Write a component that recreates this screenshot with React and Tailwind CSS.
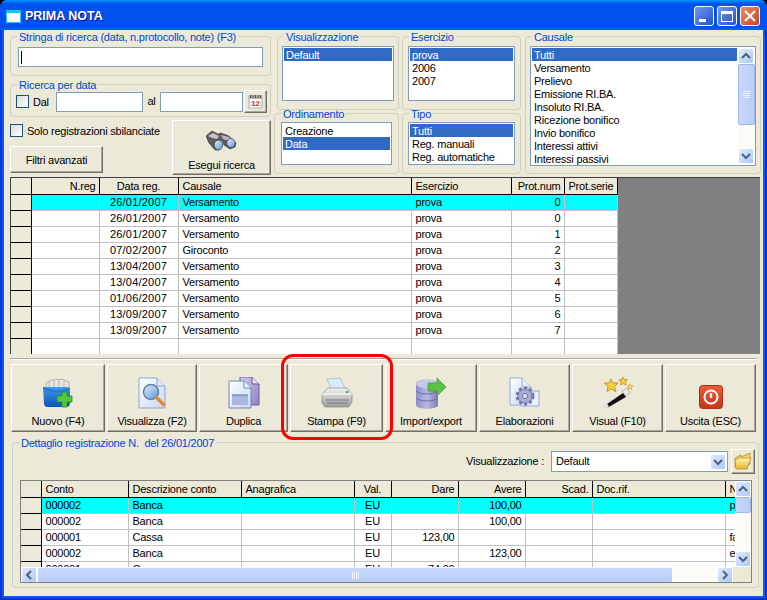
import React from 'react';

const Legend = ({ children }) => (
    <legend className="ml-[6px] px-[2px] h-[13px] leading-[14px] text-[#0046d5] whitespace-nowrap">{children}</legend>
);

const Group = ({ title, className, pad, children }) => (
    <fieldset className={`border border-[#d0d0bf] rounded-[4px] ${className}`}>
        <Legend>{title}</Legend>
        <div className={pad}>{children}</div>
    </fieldset>
);

const ListBox = ({ items, selected, className }) => (
    <div className={`border border-[#7f9db9] bg-white p-[1px] overflow-hidden ${className}`}>
        {items.map((item) => (
            <div
                key={item}
                className={`h-[13px] leading-[14px] pl-[2px] whitespace-nowrap ${item === selected ? 'bg-[#316ac5] text-white' : 'text-black'}`}
            >
                {item}
            </div>
        ))}
    </div>
);

const XpCheck = () => (
    <span className="block w-[13px] h-[13px] border border-[#1c5180] bg-gradient-to-br from-[#dcdcd7] to-white shrink-0" />
);

const Raised = ({ className, children }) => (
    <div className={`bg-[#ece9d8] border border-t-white border-l-white border-r-[#716f64] border-b-[#716f64] shadow-[inset_-1px_-1px_0_#aca899] ${className}`}>
        {children}
    </div>
);

const ScrollArrow = ({ dir }) => {
    const paths = { up: 'M3 9l4-4 4 4', down: 'M3 5l4 4 4-4', left: 'M9 3L5 7l4 4', right: 'M5 3l4 4-4 4' };
    return (
        <span className="flex items-center justify-center w-[16px] h-[16px] shrink-0 rounded-[2px] border border-white bg-gradient-to-br from-[#e1eafe] to-[#aec8f7]">
            <svg width="14" height="14" viewBox="0 0 14 14" fill="none" stroke="#4d6185" strokeWidth="2">
                <path d={paths[dir]} />
            </svg>
        </span>
    );
};

const VScroll = ({ thumb, fill, className }) => (
    <div className={`w-[17px] flex flex-col bg-[#fbfbf8] ${className}`}>
        <ScrollArrow dir="up" />
        <div className={`${thumb} rounded-[2px] border border-[#f5f8ff] outline outline-[#9fb6e6] -outline-offset-1 bg-gradient-to-r from-[#c9d8fc] to-[#b9cdf8] flex items-center justify-center shrink-0`}>
            {fill && (
                <span className="flex flex-col gap-[1px] w-[7px]">
                    <i className="block h-[1px] bg-[#eef4fe]" />
                    <i className="block h-[1px] bg-[#eef4fe]" />
                    <i className="block h-[1px] bg-[#eef4fe]" />
                    <i className="block h-[1px] bg-[#eef4fe]" />
                </span>
            )}
        </div>
        <div className="flex-1" />
        <ScrollArrow dir="down" />
    </div>
);

const mainCols = [
    { label: '', w: 20 },
    { label: 'N.reg', w: 68, right: true },
    { label: 'Data reg.', w: 79, center: true, date: true },
    { label: 'Causale', w: 233 },
    { label: 'Esercizio', w: 100 },
    { label: 'Prot.num', w: 53, right: true },
    { label: 'Prot.serie', w: 53 },
];

const mainRows = [
    ['', '', '26/01/2007', 'Versamento', 'prova', '0', ''],
    ['', '', '26/01/2007', 'Versamento', 'prova', '0', ''],
    ['', '', '26/01/2007', 'Versamento', 'prova', '1', ''],
    ['', '', '07/02/2007', 'Giroconto', 'prova', '2', ''],
    ['', '', '13/04/2007', 'Versamento', 'prova', '3', ''],
    ['', '', '13/04/2007', 'Versamento', 'prova', '4', ''],
    ['', '', '01/06/2007', 'Versamento', 'prova', '5', ''],
    ['', '', '13/09/2007', 'Versamento', 'prova', '6', ''],
    ['', '', '13/09/2007', 'Versamento', 'prova', '7', ''],
    ['', '', '', '', '', '', ''],
];

const detailCols = [
    { label: '', w: 20 },
    { label: 'Conto', w: 87 },
    { label: 'Descrizione conto', w: 113 },
    { label: 'Anagrafica', w: 113 },
    { label: 'Val.', w: 37, center: true },
    { label: 'Dare', w: 67, right: true },
    { label: 'Avere', w: 67, right: true },
    { label: 'Scad.', w: 67, right: true },
    { label: 'Doc.rif.', w: 133 },
    { label: 'Note', w: 60 },
];

const detailRows = [
    ['', '000002', 'Banca', '', 'EU', '', '100,00', '', '', 'pagamento'],
    ['', '000002', 'Banca', '', 'EU', '', '100,00', '', '', ''],
    ['', '000001', 'Cassa', '', 'EU', '123,00', '', '', '', 'fattura'],
    ['', '000002', 'Banca', '', 'EU', '', '123,00', '', '', 'estratto'],
    ['', '000001', 'Cassa', '', 'EU', '74,00', '', '', '', ''],
];

const cellAlign = (col) => {
    if (col.right) return 'text-right pr-[3px]';
    if (col.center) return 'text-center';
    return 'text-left pl-[4px]';
};

const DataGrid = ({ cols, rows }) => (
    <table className="table-fixed border-collapse" style={{ width: cols.reduce((s, c) => s + c.w, 0) }}>
        <colgroup>
            {cols.map((c, i) => (
                <col key={i} style={{ width: c.w }} />
            ))}
        </colgroup>
        <thead>
            <tr className="h-[16px]">
                {cols.map((c, i) => (
                    <th key={i} className={`p-0 font-normal leading-[12px] bg-[#ece9d8] border-r border-b border-black overflow-hidden whitespace-nowrap ${cellAlign(c)}`}>
                        {c.label}
                    </th>
                ))}
            </tr>
        </thead>
        <tbody>
            {rows.map((row, r) => (
                <tr key={r} className="h-[16px]">
                    {row.map((v, i) =>
                        i === 0 ? (
                            <td key={i} className="p-0 bg-[#ece9d8] border-r border-b border-black" />
                        ) : (
                            <td
                                key={i}
                                className={`p-0 leading-[12px] border-r border-b border-[#c0c0c0] overflow-hidden whitespace-nowrap ${r === 0 ? 'bg-[#00ffff]' : 'bg-white'} ${cellAlign(cols[i])} ${cols[i].date ? 'tracking-[0.2px]' : ''}`}
                            >
                                {v}
                            </td>
                        )
                    )}
                </tr>
            ))}
        </tbody>
    </table>
);

const Defs = () => (
    <svg width="0" height="0" className="absolute">
        <defs>
            <linearGradient id="blueFolder" x1="0" y1="0" x2="0" y2="1">
                <stop offset="0" stopColor="#3d9be8" />
                <stop offset="1" stopColor="#0a52b8" />
            </linearGradient>
            <linearGradient id="paper" x1="0" y1="0" x2="1" y2="1">
                <stop offset="0" stopColor="#ffffff" />
                <stop offset="1" stopColor="#c6d6f2" />
            </linearGradient>
            <linearGradient id="purple" x1="0" y1="0" x2="1" y2="1">
                <stop offset="0" stopColor="#d4cbec" />
                <stop offset="1" stopColor="#8f7fc4" />
            </linearGradient>
            <linearGradient id="dbCyl" x1="0" y1="0" x2="1" y2="0">
                <stop offset="0" stopColor="#8e8ec6" />
                <stop offset="0.5" stopColor="#b9b9e2" />
                <stop offset="1" stopColor="#7c7cb4" />
            </linearGradient>
            <linearGradient id="printerBody" x1="0" y1="0" x2="0" y2="1">
                <stop offset="0" stopColor="#f2f2f2" />
                <stop offset="1" stopColor="#9c9c9c" />
            </linearGradient>
            <linearGradient id="redBtn" x1="0" y1="0" x2="0" y2="1">
                <stop offset="0" stopColor="#ee5a38" />
                <stop offset="1" stopColor="#c4361a" />
            </linearGradient>
            <linearGradient id="lens" x1="0" y1="0" x2="1" y2="1">
                <stop offset="0" stopColor="#e4f0ff" />
                <stop offset="1" stopColor="#5d93dc" />
            </linearGradient>
            <linearGradient id="folderYellow" x1="0" y1="0" x2="0" y2="1">
                <stop offset="0" stopColor="#fff2a8" />
                <stop offset="1" stopColor="#eab52e" />
            </linearGradient>
        </defs>
    </svg>
);

const NuovoIcon = () => (
    <svg width="32" height="32" viewBox="0 0 32 32">
        <path d="M4 6l5-3h3l2-1 3 1 3-1 4 2 3 1v7H4z" fill="#e6e6e0" stroke="#9a9a94" strokeWidth="0.7" />
        <path d="M7 4v6M12 3v7M17 3v7M22 4v6" stroke="#b9b9b2" />
        <path d="M1 10h24l3 1v15a4 4 0 0 1-4 4H6a4 4 0 0 1-4-4z" fill="url(#blueFolder)" />
        <path d="M1 10c8 4 18 4 27 1v2c-9 3-19 3-27-1z" fill="#2079d6" />
        <path d="M20 15h5v4h5v6h-5v5h-5v-5h-5v-6h5z" fill="#54c83c" stroke="#2b8a20" strokeWidth="0.8" />
    </svg>
);

const VisualizzaIcon = () => (
    <svg width="32" height="32" viewBox="0 0 32 32">
        <path d="M3 1h18l8 8v22H3z" fill="url(#paper)" stroke="#8aa4d4" />
        <path d="M21 1v8h8" fill="#dfe8f8" stroke="#8aa4d4" />
        <circle cx="15" cy="15" r="7.5" fill="url(#lens)" stroke="#6b7e9e" strokeWidth="1.5" />
        <path d="M20.5 20.5l7 7" stroke="#e58a2c" strokeWidth="3.5" strokeLinecap="round" />
    </svg>
);

const DuplicaIcon = () => (
    <svg width="32" height="32" viewBox="0 0 32 32">
        <path d="M12 0h12l7 7v21H12z" fill="url(#purple)" stroke="#6a5aa4" />
        <path d="M24 0v7h7" fill="#e6e0f4" stroke="#6a5aa4" />
        <path d="M1 4h15l7 7v20H1z" fill="url(#paper)" stroke="#6f87bc" />
        <path d="M16 4v7h7" fill="#eef3fc" stroke="#6f87bc" />
        <rect x="4" y="17" width="16" height="11" fill="#aab9de" />
        <rect x="4" y="17" width="16" height="2.5" fill="#8ea1cf" />
    </svg>
);

const PrinterIcon = () => (
    <svg width="32" height="32" viewBox="0 0 32 32">
        <path d="M6 2l13-1 5 10-13 3z" fill="#dbeafc" stroke="#9db2cc" strokeWidth="0.7" />
        <path d="M1 17l6-6h19l5 6v8l-3 5H4l-3-4z" fill="url(#printerBody)" stroke="#8b8b8b" strokeWidth="0.7" />
        <path d="M1 17h30" stroke="#fff" />
        <path d="M5 23h23M6 26h21" stroke="#777" />
        <circle cx="26" cy="15" r="1.3" fill="#39b54a" />
    </svg>
);

const ImportIcon = () => (
    <svg width="32" height="32" viewBox="0 0 32 32">
        <path d="M1 7c0-6 22-6 22 0v21c0 5-22 5-22 0z" fill="url(#dbCyl)" />
        <ellipse cx="12" cy="7" rx="11" ry="4" fill="#c9c9ec" />
        <path d="M1 14c4 4 18 4 22 0M1 21c4 4 18 4 22 0" fill="none" stroke="#6d6da4" />
        <path d="M13 6h9V1l9 9-9 9v-5h-9z" fill="#5cc244" stroke="#3f9a2c" strokeWidth="0.7" />
    </svg>
);

const ElaborazioniIcon = () => (
    <svg width="32" height="32" viewBox="0 0 32 32">
        <path d="M1 1h12l9 9v18H1z" fill="url(#paper)" stroke="#92aad8" />
        <path d="M13 1v9h9" fill="#e6eefb" stroke="#92aad8" />
        <path d="M22 14l8 0v15H12v-4h10z" fill="#eaf1fc" stroke="#92aad8" />
        <circle cx="16" cy="19" r="8" fill="#9a9ccc" stroke="#7677a8" strokeWidth="3" strokeDasharray="3 2.2" />
        <circle cx="16" cy="19" r="6" fill="#a9abd6" />
        <circle cx="16" cy="19" r="2.6" fill="#dfe3f4" stroke="#6f70a0" />
    </svg>
);

const WandIcon = () => (
    <svg width="32" height="32" viewBox="0 0 32 32">
        <path d="M2 29l19-13 3 4L5 31z" fill="#111" />
        <path d="M1 29l4-3 2 4-3 2z" fill="#ddd" />
        <path d="M20 14l5-3 3 5-4 3z" fill="#e8e8e8" stroke="#999" strokeWidth="0.6" />
        <path d="M9 2l2 4 5 0-3.5 3.5 1.5 5-5-2.5-4 2.5 1-5L2 6h5z" fill="#f6cf3a" stroke="#a97e12" strokeWidth="0.7" />
        <path d="M21 0l1.5 2.5 3 .2-2 2.2.6 3-3-1.3-2.6 1.3.5-3-2-2.2 3-.2z" fill="#f6cf3a" stroke="#a97e12" strokeWidth="0.6" />
        <path d="M28 7l1 2 2 0-1.5 1.500.5 2-2-1-2 1 .5-2L25 9h2z" fill="#f9dd6a" stroke="#b08a1c" strokeWidth="0.5" />
    </svg>
);

const PowerIcon = () => (
    <svg width="24" height="24" viewBox="0 0 24 24">
        <rect x="0.5" y="0.5" width="23" height="23" rx="3" fill="url(#redBtn)" stroke="#a83217" />
        <circle cx="12" cy="12" r="6.5" fill="none" stroke="#fff" strokeWidth="2" />
        <path d="M12 8v5" stroke="#fff" strokeWidth="2.4" />
    </svg>
);

const Binoculars = () => (
    <svg width="32" height="22" viewBox="0 0 32 22">
        <path d="M0 6l6-5 6 3 3-1 8 3 7 7-1 4-5 2-6-4-2-5-2 1 1 5-2 4-4 0-6-7z" fill="#5c5c60" stroke="#303034" strokeWidth="0.6" />
        <path d="M2 6l5-3 6 3-2 3-5-1z" fill="#c4c4c8" />
        <path d="M15 5l8 2 3 3-7 0-3-2z" fill="#b4b4b8" />
        <ellipse cx="12.500" cy="15" rx="4.200" ry="4.800" fill="url(#lens)" stroke="#3c3c40" strokeWidth="0.7" />
        <ellipse cx="25" cy="13" rx="4.200" ry="4.500" fill="url(#lens)" stroke="#3c3c40" strokeWidth="0.7" />
    </svg>
);

const CalendarIcon = () => (
    <svg width="15" height="15" viewBox="0 0 15 15">
        <rect x="1" y="2" width="13" height="12" fill="#fff" stroke="#8d8d9c" strokeWidth="0.7" />
        <rect x="1" y="1" width="13" height="4" fill="#b6b0a4" />
        <path d="M2.500 1v3M5 1v3M7.500 1v3M10 1v3M12.500 1v3" stroke="#55524c" />
        <path d="M1 11h13M1 8.500h13" stroke="#c5cce8" />
        <text x="7.500" y="11.500" textAnchor="middle" fontSize="8" fontWeight="700" fill="#e1471b" fontFamily="Liberation Sans, sans-serif">12</text>
    </svg>
);

const FolderIcon = () => (
    <svg width="18" height="17" viewBox="0 0 18 17">
        <path d="M1 5l6-3v2l9-4v11l-9 5-6-2z" fill="#f4d468" stroke="#a98823" strokeWidth="0.7" />
        <path d="M1 7l4-2 12 0-4 11H2z" fill="url(#folderYellow)" stroke="#a98823" strokeWidth="0.7" />
    </svg>
);

const ToolButton = ({ icon, label }) => (
    <Raised className="h-[68px] mr-[2px] flex flex-col items-center">
        <div className="h-[45px] flex items-end justify-center pb-[1px]">{icon}</div>
        <div className="mt-[5px] leading-[13px] whitespace-nowrap">{label}</div>
    </Raised>
);

const tools = [
    { label: 'Nuovo (F4)', icon: <NuovoIcon /> },
    { label: 'Visualizza (F2)', icon: <VisualizzaIcon /> },
    { label: 'Duplica', icon: <DuplicaIcon /> },
    { label: 'Stampa (F9)', icon: <PrinterIcon /> },
    { label: 'Import/export', icon: <ImportIcon /> },
    { label: 'Elaborazioni', icon: <ElaborazioniIcon /> },
    { label: 'Visual (F10)', icon: <WandIcon /> },
    { label: 'Uscita (ESC)', icon: <PowerIcon /> },
];

const causali = ['Tutti', 'Versamento', 'Prelievo', 'Emissione RI.BA.', 'Insoluto RI.BA.', 'Ricezione bonifico', 'Invio bonifico', 'Interessi attivi', 'Interessi passivi'];

const TitleBar = () => (
    <div className="h-[30px] shrink-0 rounded-t-[7px] bg-gradient-to-b from-[#0997ff] via-[#0053ee] via-[12%] to-[#0050ee] flex items-center pt-[2px] pl-[6px] pr-[7px] tracking-normal">
        <span className="block w-[15px] h-[13px] bg-white border-t-[3px] border-[#14c8e6] border-x border-b" />
        <span className="ml-[4px] mt-[1px] text-white font-bold text-[12.5px] [text-shadow:1px_1px_#0f1089]">PRIMA NOTA</span>
        <div className="ml-auto flex gap-[3px]">
            <span className="relative w-[20px] h-[20px] rounded-[3px] border border-white bg-gradient-to-br from-[#6f97f3] to-[#2550d0]">
                <i className="absolute left-[4px] bottom-[3px] w-[7px] h-[3px] bg-white" />
            </span>
            <span className="flex items-center justify-center w-[20px] h-[20px] rounded-[3px] border border-white bg-gradient-to-br from-[#6f97f3] to-[#2550d0]">
                <i className="block w-[12px] h-[11px] border border-white border-t-[3px]" />
            </span>
            <span className="flex items-center justify-center w-[20px] h-[20px] rounded-[3px] border border-white bg-gradient-to-br from-[#ee8c68] to-[#c8401c]">
                <svg width="12" height="12" viewBox="0 0 12 12" stroke="#fff" strokeWidth="2.200">
                    <path d="M1 1l10 10M11 1L1 11" />
                </svg>
            </span>
        </div>
    </div>
);

const SearchPanel = () => (
    <div className="flex h-[146px] shrink-0">
        <div className="w-[261px] ml-[6px] flex flex-col">
            <Group title="Stringa di ricerca (data, n.protocollo, note) (F3)" className="h-[46px]" pad="px-[7px]">
                <div className="mt-[4px] h-[20px] border border-[#7f9db9] bg-white flex items-center pl-[2px]">
                    <i className="block w-[1px] h-[13px] bg-black" />
                </div>
            </Group>
            <Group title="Ricerca per data" className="mt-[2px] h-[39px]" pad="pl-[5px] pr-[3px]">
                <div className="flex items-center h-[23px] mt-[-1px]">
                    <XpCheck />
                    <span className="ml-[4px] w-[23px] pt-[1px]">Dal</span>
                    <span className="block w-[87px] h-[20px] border border-[#7f9db9] bg-white" />
                    <span className="w-[17px] text-center">al</span>
                    <span className="block w-[83px] h-[20px] border border-[#7f9db9] bg-white" />
                    <Raised className="ml-[1px] w-[23px] h-[23px] flex items-center justify-center"><CalendarIcon /></Raised>
                </div>
            </Group>
            <div className="mt-[3px] flex justify-between">
                <div>
                    <div className="mt-[4px] flex items-center h-[13px]">
                        <XpCheck />
                        <span className="ml-[4px] pt-[1px] whitespace-nowrap">Solo registrazioni sbilanciate</span>
                    </div>
                    <Raised className="mt-[9px] w-[93px] h-[27px] pt-[1px] flex items-center justify-center">Filtri avanzati</Raised>
                </div>
                <Raised className="w-[99px] h-[55px] flex flex-col items-center pt-[9px]">
                    <Binoculars />
                    <span className="mt-[7px] leading-[13px]">Esegui ricerca</span>
                </Raised>
            </div>
        </div>
        <div className="w-[125px] ml-[3px] flex flex-col">
            <Group title="Visualizzazione" className="ml-[3px] h-[80px]" pad="px-[4px]">
                <ListBox items={['Default']} selected="Default" className="mt-[3px] h-[55px]" />
            </Group>
            <Group title="Ordinamento" className="-mt-[3px] h-[67px]" pad="px-[6px]">
                <ListBox items={['Creazione', 'Data']} selected="Data" className="mt-[2px] h-[43px]" />
            </Group>
        </div>
        <div className="w-[119px] ml-[3px] flex flex-col">
            <Group title="Esercizio" className="h-[80px]" pad="px-[5px]">
                <ListBox items={['prova', '2006', '2007']} selected="prova" className="mt-[3px] h-[55px]" />
            </Group>
            <Group title="Tipo" className="-mt-[3px] h-[67px]" pad="px-[5px]">
                <ListBox items={['Tutti', 'Reg. manuali', 'Reg. automatiche']} selected="Tutti" className="mt-[2px] h-[43px]" />
            </Group>
        </div>
        <Group title="Causale" className="w-[236px] ml-[4px] h-[144px]" pad="px-[4px]">
            <div className="mt-[3px] flex h-[120px] border border-[#7f9db9] bg-white">
                <ListBox items={causali} selected="Tutti" className="flex-1 !border-0" />
                <VScroll thumb="h-[61px]" fill className="py-[1px]" />
            </div>
        </Group>
    </div>
);

const MainGrid = () => (
    <div className="ml-[6px] mr-[3px] mt-[1px] h-[177px] shrink-0 flex bg-[#808080] border-l border-t border-[#404040] overflow-hidden">
        <DataGrid cols={mainCols} rows={mainRows} />
    </div>
);

const Toolbar = () => (
    <div className="relative shrink-0">
        <div className="mx-[6px] mt-[4px] border-t border-b border-t-[#aca899] border-b-white h-[2px]" />
        <div className="ml-[7px] mt-[4px] grid grid-cols-[96px_92px_91px_95px_94px_93px_93px_93px]">
            {tools.map((t) => (
                <ToolButton key={t.label} icon={t.icon} label={t.label} />
            ))}
        </div>
        <div className="absolute left-[277px] top-0 w-[112px] h-[86px] border-[3px] border-[#ff0000] rounded-[12px] pointer-events-none" />
    </div>
);

const DetailPanel = () => (
    <fieldset className="ml-[8px] mr-[4px] mt-[4px] h-[152px] border border-[#d0d0bf] rounded-[4px]">
        <Legend>Dettaglio registrazione N.&nbsp; del 26/01/2007</Legend>
        <div className="pl-[7px] pr-[3px]">
            <div className="flex items-center justify-end h-[25px]">
                <span className="mr-[7px]">Visualizzazione :</span>
                <div className="w-[177px] h-[21px] border border-[#7f9db9] bg-white flex items-center justify-between pl-[4px] pr-[1px]">
                    Default
                    <ScrollArrow dir="down" />
                </div>
                <Raised className="ml-[3px] w-[24px] h-[25px] flex items-center justify-center"><FolderIcon /></Raised>
            </div>
            <div className="mt-[6px] h-[103px] w-[732px] border border-[#808080] bg-white flex flex-col overflow-hidden">
                <div className="flex h-[86px]">
                    <div className="w-[714px] overflow-hidden">
                        <DataGrid cols={detailCols} rows={detailRows} />
                    </div>
                    <VScroll thumb="h-[16px]" className="flex-1" />
                </div>
                <div className="h-[16px] flex bg-[#fbfbf8]">
                    <ScrollArrow dir="left" />
                    <div className="w-[636px] rounded-[2px] border border-[#f5f8ff] bg-gradient-to-b from-[#c9d8fc] to-[#b9cdf8] flex items-center justify-center gap-[1px]">
                        <i className="block w-[1px] h-[7px] bg-[#eef4fe]" />
                        <i className="block w-[1px] h-[7px] bg-[#eef4fe]" />
                        <i className="block w-[1px] h-[7px] bg-[#eef4fe]" />
                        <i className="block w-[1px] h-[7px] bg-[#eef4fe]" />
                    </div>
                    <div className="flex-1" />
                    <ScrollArrow dir="right" />
                    <div className="w-[18px] bg-[#ece9d8]" />
                </div>
            </div>
        </div>
    </fieldset>
);

export default function App() {
    return (
        <div className="w-[767px] h-[600px] bg-black overflow-hidden font-['Liberation_Sans',Arial,sans-serif] text-[11px] tracking-[-0.22px] text-black">
            <Defs />
            <div className="w-full h-full rounded-t-[7px] bg-[#0831d9] flex flex-col">
                <TitleBar />
                <div className="mx-[4px] h-[566px] bg-[#ece9d8] flex flex-col shadow-[0_0_0_2px_#0a5cf0]">
                    <SearchPanel />
                    <MainGrid />
                    <Toolbar />
                    <DetailPanel />
                </div>
            </div>
        </div>
    );
}
